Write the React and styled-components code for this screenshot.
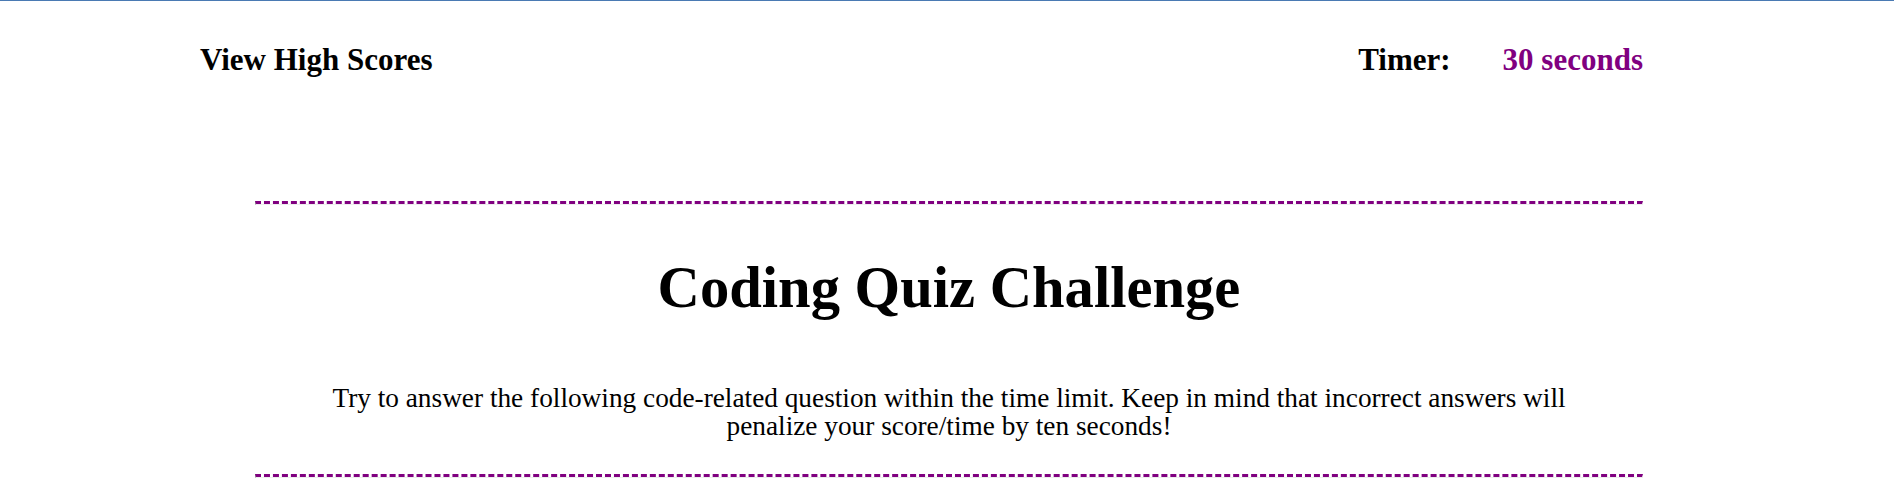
import styled, { createGlobalStyle } from 'styled-components';

const GlobalStyle = createGlobalStyle`
  html,
  body {
    margin: 0;
    padding: 0;
    background-color: #ffffff;
  }

  body {
    border-top: 1px solid #4a7ab3;
    font-family: 'Liberation Serif', 'Times New Roman', serif;
    color: #000000;
  }
`;

const Header = styled.header`
  display: flex;
  justify-content: space-between;
  align-items: center;
  margin-top: 41px;
  padding: 0 251px 0 200px;
  font-weight: 700;
  font-size: 31px;
  line-height: 36px;
`;

const HighScoresLink = styled.a`
  color: #000000;
  text-decoration: none;
  cursor: pointer;
`;

const TimerBox = styled.div`
  display: flex;
  gap: 52px;
`;

const TimerValue = styled.span`
  color: #800080;
`;

const Main = styled.main`
  display: flex;
  flex-direction: column;
  align-items: center;
  padding: 0 251px 0 255px;
`;

const Divider = styled.hr`
  align-self: stretch;
  margin: ${({ $top }) => $top}px 0 0;
  border-top: 3px dashed #800080;
`;

const Title = styled.h1`
  margin: 50px 0 0;
  font-size: 58.6px;
  line-height: 66px;
  font-weight: 700;
  text-align: center;
`;

const Intro = styled.p`
  max-width: 1290px;
  margin: 63px 0 0;
  font-size: 27.3px;
  line-height: 28px;
  text-align: center;
`;

export default function App() {
  return (
    <>
      <GlobalStyle />
      <Header>
        <HighScoresLink>View High Scores</HighScoresLink>
        <TimerBox>
          <span>Timer:</span>
          <TimerValue>30 seconds</TimerValue>
        </TimerBox>
      </Header>
      <Main>
        <Divider $top={123} />
        <Title>Coding Quiz Challenge</Title>
        <Intro>
          Try to answer the following code-related question within the time
          limit. Keep in mind that incorrect answers will penalize your
          score/time by ten seconds!
        </Intro>
        <Divider $top={34} />
      </Main>
    </>
  );
}
